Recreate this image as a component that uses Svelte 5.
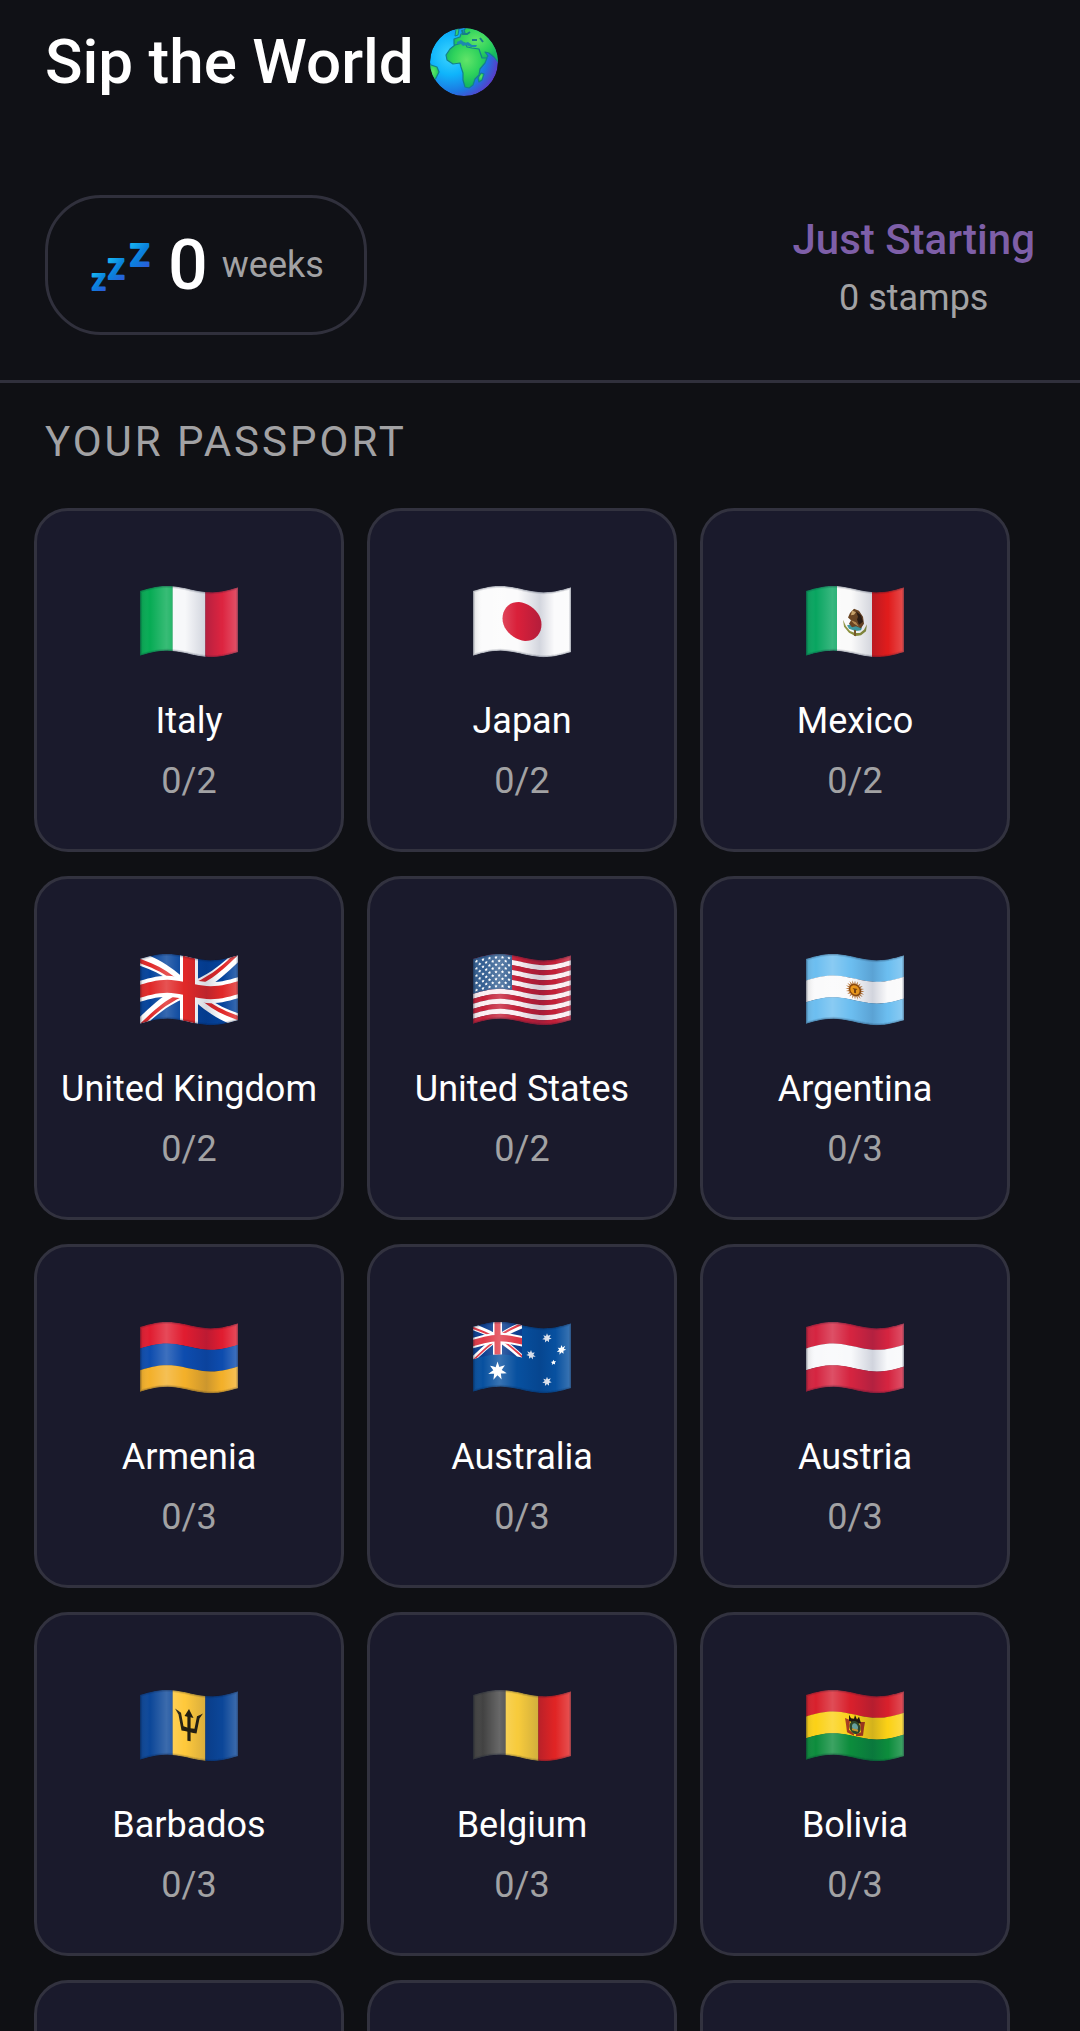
<script lang="ts">
	type Point = [number, number]
	type Shape = { points: Point[]; fill: string }
	type Country = { name: string; stamps: number; total: number; flag: Shape[] }

	// flags are described flat on a 98 x 65 cloth and then waved
	const W = 98
	const H = 65

	const wave = (x: number) => 3 - 4 * Math.sin((2 * Math.PI * x) / W) + 1.8 * (1 - x / 49)

	const toPath = (points: Point[]) => {
		const out: string[] = []
		points.forEach(([x1, y1], i) => {
			const [x2, y2] = points[(i + 1) % points.length]
			const steps = Math.max(1, Math.ceil(Math.abs(x2 - x1) / 4))
			for (let s = 0; s < steps; s++) {
				const x = x1 + ((x2 - x1) * s) / steps
				const y = y1 + ((y2 - y1) * s) / steps
				out.push(`${x.toFixed(2)},${(y + wave(x)).toFixed(2)}`)
			}
		})
		return `M${out.join('L')}Z`
	}

	const rect = (x: number, y: number, w: number, h: number, fill: string): Shape => ({
		points: [[x, y], [x + w, y], [x + w, y + h], [x, y + h]],
		fill
	})

	const poly = (fill: string, ...points: Point[]): Shape => ({ points, fill })

	const oval = (cx: number, cy: number, rx: number, ry: number, fill: string): Shape => ({
		points: Array.from({ length: 40 }, (_, i): Point => {
			const a = (i * Math.PI) / 20
			return [cx + rx * Math.cos(a), cy + ry * Math.sin(a)]
		}),
		fill
	})

	const star = (cx: number, cy: number, r: number, tips: number, inner: number, fill: string): Shape => ({
		points: Array.from({ length: tips * 2 }, (_, i): Point => {
			const a = (i * Math.PI) / tips - Math.PI / 2
			const d = i % 2 ? r * inner : r
			return [cx + d * Math.cos(a), cy + d * Math.sin(a)]
		}),
		fill
	})

	const rows = (...fills: string[]) => fills.map((f, i) => rect(0, (i * H) / fills.length, W, H / fills.length + 0.2, f))
	const cols = (...fills: string[]) => fills.map((f, i) => rect((i * W) / fills.length, 0, W / fills.length + 0.2, H, f))

	const unionJack = (k: number, blue: string, red: string): Shape[] =>
		[
			rect(0, 0, W, H, blue),
			poly('#fff', [0, 0], [10, 0], [98, 58], [98, 65], [88, 65], [0, 7]),
			poly('#fff', [98, 0], [88, 0], [0, 58], [0, 65], [10, 65], [98, 7]),
			poly(red, [0, 0], [0, 4.5], [31, 25], [38, 25]),
			poly(red, [98, 0], [91, 0], [54, 25], [61, 25]),
			poly(red, [98, 65], [98, 60.5], [67, 40], [60, 40]),
			poly(red, [0, 65], [7, 65], [44, 40], [37, 40]),
			rect(40, 0, 18, H, '#fff'),
			rect(0, 22, W, 21, '#fff'),
			rect(43, 0, 12, H, red),
			rect(0, 26, W, 13, red)
		].map((s) => ({ fill: s.fill, points: s.points.map(([x, y]): Point => [x * k, y * k]) }))

	const usStars: Shape[] = []
	for (let r = 0; r < 9; r++) {
		for (let c = 0; c < (r % 2 ? 5 : 6); c++) {
			usStars.push(star(3.5 + c * 6.5 + (r % 2 ? 3.2 : 0), 3.5 + r * 3.6, 1.7, 5, 0.5, '#fff'))
		}
	}

	const mexicoArms: Shape[] = [
		poly('#8a8f3c', [37, 33], [38, 40], [43, 45], [49, 47], [55, 45], [60, 40], [61, 33], [58, 39], [54, 43], [49, 44], [44, 43], [40, 39]),
		poly('#3f9aa0', [41, 38], [46, 36], [56, 37], [55, 40], [49, 42], [43, 41]),
		poly('#6b4522', [48, 20], [53, 21], [57, 26], [58, 33], [55, 38], [50, 37], [46, 39], [43, 36], [45, 32], [42, 30], [44, 25]),
		poly('#2e1d10', [50, 22], [55, 25], [57, 31], [53, 35], [51, 30], [52, 27]),
		poly('#c9a36a', [46, 22], [50, 23], [48, 26], [45, 27]),
		poly('#b98b50', [45, 32], [50, 33], [53, 37], [48, 35]),
		rect(48, 41, 2, 6, '#7a5a2a')
	]

	const boliviaArms: Shape[] = [
		poly('#a5381c', [39, 27], [44, 28], [43, 38], [48, 41], [48, 43], [41, 41], [40, 33]),
		poly('#a5381c', [59, 27], [54, 28], [55, 38], [50, 41], [50, 43], [57, 41], [58, 33]),
		poly('#22180f', [43, 23], [45, 26], [48, 26], [49, 22], [51, 26], [53, 23], [55, 29], [49, 31], [43, 29]),
		oval(49, 34.5, 5.5, 6.5, '#30482a'),
		oval(49, 34, 3, 3.6, '#69a4a0'),
		rect(46, 36, 6, 2, '#c99a2c')
	]

	const trident: Shape[] = [
		rect(47.4, 20, 3.2, 28, '#241f10'),
		poly('#241f10', [49, 16], [53.5, 24], [44.5, 24]),
		poly('#241f10', [35, 18], [41, 21.5], [43.5, 34.5], [48, 35], [48, 39], [41.5, 39], [38.5, 23.5]),
		poly('#241f10', [63, 18], [57, 21.5], [54.5, 34.5], [50, 35], [50, 39], [56.5, 39], [59.5, 23.5])
	]

	const countries: Country[] = [
		{ name: 'Italy', stamps: 0, total: 2, flag: cols('#06ab54', '#f7f8fa', '#dc2440') },
		{ name: 'Japan', stamps: 0, total: 2, flag: [rect(0, 0, W, H, '#fbfbfc'), oval(49, 32.5, 19.5, 19, '#d9203a')] },
		{
			name: 'Mexico',
			stamps: 0,
			total: 2,
			flag: [rect(0, 0, 31, H, '#08a560'), rect(31, 0, 35, H, '#fafafa'), rect(66, 0, 32, H, '#e01c1c'), ...mexicoArms]
		},
		{ name: 'United Kingdom', stamps: 0, total: 2, flag: unionJack(1, '#04439c', '#e02828') },
		{
			name: 'United States',
			stamps: 0,
			total: 2,
			flag: [
				...Array.from({ length: 13 }, (_, i) => rect(0, i * 5, W, 5.2, i % 2 ? '#fbeef2' : '#c41f38')),
				rect(0, 0, 39, 35, '#345f92'),
				...usStars
			]
		},
		{
			name: 'Argentina',
			stamps: 0,
			total: 3,
			flag: [
				...rows('#6cbef0', '#fafafb', '#6cbef0'),
				star(49, 33, 9.5, 20, 0.6, '#b8773a'),
				oval(49, 33, 6, 6, '#8a4a10'),
				oval(49, 33, 4.6, 4.6, '#ee9a1c'),
				poly('#7c430c', [46.5, 31.5], [51.5, 31.5], [50, 33], [50, 36], [48, 36], [48, 33])
			]
		},
		{ name: 'Armenia', stamps: 0, total: 3, flag: rows('#e01c30', '#0d4cae', '#f3b02a') },
		{
			name: 'Australia',
			stamps: 0,
			total: 3,
			flag: [
				rect(0, 0, W, H, '#07509f'),
				...unionJack(0.5, '#0b3f90', '#e03a48'),
				star(24.5, 49, 9.5, 7, 0.45, '#fff'),
				star(74, 10, 4.8, 7, 0.5, '#eef3fb'),
				star(58, 28, 4.8, 7, 0.5, '#eef3fb'),
				star(88.5, 24, 4.8, 7, 0.5, '#fff'),
				star(80.5, 35, 2.8, 5, 0.5, '#fff'),
				star(74, 53.5, 4.8, 7, 0.5, '#eef3fb')
			]
		},
		{ name: 'Austria', stamps: 0, total: 3, flag: rows('#d52440', '#f8f9fb', '#d52440') },
		{ name: 'Barbados', stamps: 0, total: 3, flag: [...cols('#0b4698', '#ffc93c', '#0b4698'), ...trident] },
		{ name: 'Belgium', stamps: 0, total: 3, flag: cols('#424242', '#f7cb3c', '#e02424') },
		{ name: 'Bolivia', stamps: 0, total: 3, flag: [...rows('#d8202c', '#fbd116', '#0c8c3c'), ...boliviaArms] }
	]

	const pending = [0, 1, 2]

	const weeks = 0
	const rank = 'Just Starting'
	const stamps = countries.reduce((sum, c) => sum + c.stamps, 0)
	const cloth = toPath([[0, 0], [W, 0], [W, H], [0, H]])
</script>

{#snippet waved(flag: Shape[], i: number)}
	<svg class="flag" viewBox="0 0 98 72" aria-hidden="true">
		<defs>
			<clipPath id="cloth-{i}"><path d={cloth} /></clipPath>
			<linearGradient id="fold-{i}">
				<stop offset="0" stop-color="#000" stop-opacity="0.12" />
				<stop offset="0.1" stop-color="#fff" stop-opacity="0" />
				<stop offset="0.27" stop-color="#fff" stop-opacity="0.2" />
				<stop offset="0.45" stop-color="#fff" stop-opacity="0" />
				<stop offset="0.46" stop-color="#001040" stop-opacity="0" />
				<stop offset="0.68" stop-color="#001040" stop-opacity="0.16" />
				<stop offset="0.83" stop-color="#001040" stop-opacity="0" />
				<stop offset="0.84" stop-color="#fff" stop-opacity="0" />
				<stop offset="1" stop-color="#fff" stop-opacity="0.22" />
			</linearGradient>
		</defs>
		<g clip-path="url(#cloth-{i})">
			{#each flag as shape}
				<path d={toPath(shape.points)} fill={shape.fill} />
			{/each}
			<path d={cloth} fill="url(#fold-{i})" />
			<path d={cloth} fill="none" stroke="#101830" stroke-opacity="0.12" stroke-width="4" />
			<path d={cloth} fill="none" stroke="#101830" stroke-opacity="0.2" stroke-width="2" />
		</g>
	</svg>
{/snippet}

<div class="app">
	<header>
		<h1>Sip the World</h1>
		<svg class="globe" viewBox="0 0 68 68" aria-hidden="true">
			<defs>
				<radialGradient id="sea" cx="0.3" cy="0.4" r="0.72">
					<stop offset="0" stop-color="#3fd6ff" />
					<stop offset="0.4" stop-color="#0fb4fb" />
					<stop offset="0.75" stop-color="#1c78e2" />
					<stop offset="1" stop-color="#5a3cc8" />
				</radialGradient>
				<radialGradient id="land" cx="0.5" cy="0.38" r="0.55">
					<stop offset="0" stop-color="#62e468" />
					<stop offset="0.6" stop-color="#2fd35c" />
					<stop offset="1" stop-color="#16b860" />
				</radialGradient>
				<clipPath id="ball"><circle cx="34" cy="34" r="34" /></clipPath>
			</defs>
			<g clip-path="url(#ball)">
				<circle cx="34" cy="34" r="34" fill="url(#sea)" />
				<g fill="url(#land)" stroke="#14808c" stroke-width="1.2" stroke-linejoin="round">
					<path d="M24 16l0-5 6-2 1-3 4-1-1-3 3-3h12l14 12 6 15-1 8-4-5-5-4-4-1 3 4-3 4-4 1-3-7-9-1-4-3-5-2-4 2z" />
					<path d="M25 17l7-2 3 0 2 4 5 1 7 1 3 9 5 0-2 5-5 6-1 6-4 4-2 6-4 3-4-1-2-7 0-7-2-6-1-4-7 1-6-4-1-5 4-6z" />
					<path d="M51 45l3 1-2 6-3 2-1-4z" />
					<path d="M-2 36l9 3 2 5-3 6-5 6-4-4z" />
				</g>
				<path d="M27 14l4-2 4 3 3-1 4 3 5 0-1 2-5 0-5-2-3 1-2-2-4 0z" fill="#1d88b0" />
				<path d="M26 1l3 0-1 6-3 1z" fill="#35d070" stroke="#14808c" />
				<path d="M32 2l1 4 4 0 3-2M42 12l5 0M50 10l3 4" fill="none" stroke="#177e88" stroke-width="2" />
			</g>
		</svg>
	</header>

	<section class="stats">
		<div class="streak">
			<svg class="sleep" viewBox="0 -10 64 66" aria-hidden="true">
				<defs>
					<linearGradient id="zed" x1="0.2" y1="0" x2="0.8" y2="1">
						<stop offset="0.1" stop-color="#16b0ee" />
						<stop offset="0.5" stop-color="#0a80dc" />
						<stop offset="0.95" stop-color="#2f58d8" />
					</linearGradient>
				</defs>
				<text x="40" y="24" font-size="32">Z</text>
				<text x="18" y="37" font-size="27">Z</text>
				<text x="2" y="48" font-size="22">Z</text>
			</svg>
			<span class="count">{weeks}</span>
			<span class="muted">weeks</span>
		</div>
		<div class="rank">
			<strong>{rank}</strong>
			<span class="muted">{stamps} stamps</span>
		</div>
	</section>

	<main>
		<h2>YOUR PASSPORT</h2>
		<div class="grid">
			{#each countries as country, i (country.name)}
				<button class="card" type="button">
					{@render waved(country.flag, i)}
					<span class="name">{country.name}</span>
					<span class="muted">{country.stamps}/{country.total}</span>
				</button>
			{/each}
			{#each pending as slot (slot)}
				<div class="card"></div>
			{/each}
		</div>
	</main>
</div>

<style>
	:global(body) {
		margin: 0;
		background: #0f1014;
	}
	.app {
		height: 100vh;
		overflow: hidden;
		background: #0f1014;
		color: #fff;
		font-family: Roboto, "Noto Sans", sans-serif;
	}
	header {
		display: flex;
		align-items: center;
		gap: 16px;
		padding: 24px 45px 50px;
		background: #101116;
	}
	h1 {
		margin: 0;
		font-size: 62px;
		line-height: 76px;
		font-weight: 500;
	}
	.globe {
		width: 68px;
		height: 68px;
	}
	.stats {
		display: flex;
		justify-content: space-between;
		align-items: center;
		padding: 45px;
		border-bottom: 3px solid #30303c;
		background: #101116;
	}
	.streak {
		display: flex;
		align-items: center;
		gap: 14px;
		box-sizing: border-box;
		height: 140px;
		padding: 0 40px 0 42px;
		border: 3px solid #30303c;
		border-radius: 56px;
	}
	.sleep {
		width: 64px;
		height: 66px;
	}
	.sleep text {
		font-weight: 700;
		fill: url(#zed);
		stroke: url(#zed);
		stroke-width: 2;
		stroke-linejoin: round;
	}
	.count {
		font-size: 70px;
		line-height: 80px;
		font-weight: 500;
	}
	.muted {
		color: #a2a2a4;
		font-size: 36px;
		line-height: 44px;
	}
	.rank {
		display: flex;
		flex-direction: column;
		align-items: center;
		gap: 6px;
	}
	.rank strong {
		color: #7e5fa8;
		font-size: 42px;
		line-height: 60px;
		font-weight: 500;
	}
	h2 {
		margin: 0;
		padding: 33px 45px 40px;
		color: #a2a2a4;
		font-size: 42px;
		line-height: 52px;
		font-weight: 400;
		letter-spacing: 3px;
	}
	.grid {
		display: grid;
		grid-template-columns: repeat(3, 1fr);
		gap: 24px 23px;
		padding: 0 70px 0 34px;
	}
	.card {
		display: flex;
		flex-direction: column;
		align-items: center;
		box-sizing: border-box;
		min-height: 344px;
		padding: 75px 0 46px;
		border: 3px solid #32323f;
		border-radius: 34px;
		background: #1a1a2c;
		color: #fff;
		font-family: inherit;
	}
	.flag {
		width: 98px;
		height: 72px;
		margin-bottom: 41px;
	}
	.name {
		margin-bottom: 16px;
		font-size: 36px;
		line-height: 44px;
		white-space: nowrap;
	}
</style>
